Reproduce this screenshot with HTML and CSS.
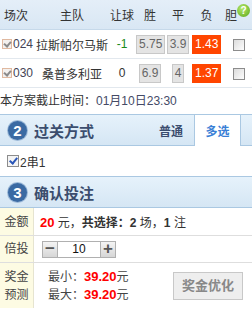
FILE: index.html
```html
<!DOCTYPE html>
<html lang="zh-CN">
<head>
    <meta charset="UTF-8">
    <meta name="viewport" content="width=device-width, initial-scale=1.0">
    <title>确认投注</title>
    <link rel="stylesheet" href="styles.css">
</head>
<body>
    <div class="panel">
        <div class="match-head">
            <span class="c-no">场次</span>
            <span class="c-team">主队</span>
            <span class="c-rq">让球</span>
            <span class="c-odd">胜</span>
            <span class="c-odd">平</span>
            <span class="c-odd">负</span>
            <span class="c-dan">胆<i class="help">?</i></span>
        </div>

        <div class="match-row">
            <span class="c-no"><i class="tick"></i>024</span>
            <span class="c-team">拉斯帕尔马斯</span>
            <span class="c-rq minus">-1</span>
            <span class="c-odd"><b class="odd">5.75</b></span>
            <span class="c-odd"><b class="odd">3.9</b></span>
            <span class="c-odd"><b class="odd on">1.43</b></span>
            <span class="c-dan"><i class="box"></i></span>
        </div>
        <div class="match-row">
            <span class="c-no"><i class="tick"></i>030</span>
            <span class="c-team">桑普多利亚</span>
            <span class="c-rq">0</span>
            <span class="c-odd"><b class="odd">6.9</b></span>
            <span class="c-odd"><b class="odd">4</b></span>
            <span class="c-odd"><b class="odd on">1.37</b></span>
            <span class="c-dan"><i class="box"></i></span>
        </div>

        <div class="deadline">本方案截止时间：<span>01月10日23:30</span></div>

        <div class="sec-head">
            <span class="num">2</span>
            <span class="sec-title">过关方式</span>
            <span class="tab">普通</span>
            <span class="tab active">多选</span>
        </div>
        <div class="pass-row">
            <i class="check"></i>2串1
        </div>

        <div class="sec-head">
            <span class="num">3</span>
            <span class="sec-title">确认投注</span>
        </div>
        <div class="form-row amount">
            <span class="label">金额</span>
            <span class="value"><span><em class="red">20</em> 元，<strong>共选择：</strong><strong>2</strong> 场，<strong>1</strong> 注</span></span>
        </div>
        <div class="form-row multiple">
            <span class="label">倍投</span>
            <span class="value">
                <span class="stepper">
                    <span class="step">&minus;</span>
                    <span class="times">10</span>
                    <span class="step">+</span>
                </span>
            </span>
        </div>
        <div class="form-row prize">
            <span class="label">奖金<br>预测</span>
            <span class="value">
                <span class="prize-list">
                    <span>最小：<em class="red">39.20</em>元</span>
                    <span>最大：<em class="red">39.20</em>元</span>
                </span>
                <span class="opt-btn">奖金优化</span>
            </span>
        </div>
    </div>
</body>
</html>
```

FILE: styles.css
```css
body {
    margin: 0;
    padding: 0;
    background-color: #fff;
    font-family: "Liberation Sans", "Noto Sans CJK SC", sans-serif;
    font-size: 12px;
    color: #333;
}
.panel {
    width: 252px;
}
.match-head,
.match-row {
    display: grid;
    grid-template-columns: 36px 72px 28px 28px 28px 29px 31px;
    align-items: center;
}
.match-head {
    height: 29px;
    background: linear-gradient(#e4eef8, #d9e7f4);
    border-bottom: 1px solid #c6d9ea;
    font-size: 12px;
}
.match-head span {
    text-align: center;
}
.match-head .c-no {
    text-align: left;
    padding-left: 4px;
}
.match-head .c-dan {
    text-align: left;
    padding-left: 4px;
    white-space: nowrap;
}
.help {
    display: inline-block;
    vertical-align: top;
    margin-top: -2px;
    width: 13px;
    height: 13px;
    border-radius: 50%;
    background: radial-gradient(circle at 40% 35%, #b5ea6a, #5aa51a);
    color: #fff;
    font-style: normal;
    font-weight: bold;
    font-size: 10px;
    line-height: 13px;
    text-align: center;
}
.match-row {
    height: 28px;
    border-bottom: 1px solid #e2e8ee;
    font-size: 12px;
}
.match-row .c-no {
    display: flex;
    align-items: center;
    padding-left: 2px;
    color: #445;
}
.match-row .c-team,
.match-row .c-rq,
.match-row .c-odd {
    text-align: center;
    color: #333;
}
.match-row .c-rq.minus {
    color: #1a8a1a;
}
.tick {
    display: inline-block;
    width: 8px;
    height: 8px;
    border: 1px solid #e0b9a0;
    background: #f3f0ee;
    position: relative;
    margin-right: 1px;
}
.tick::after {
    content: "";
    position: absolute;
    left: 2px;
    top: 0;
    width: 3px;
    height: 5px;
    border: solid #8a8a8a;
    border-width: 0 2px 2px 0;
    transform: rotate(40deg);
}
.odd {
    display: inline-block;
    padding: 0 2px;
    height: 17px;
    line-height: 17px;
    background: #e4e4e4;
    border: 1px solid #c8c8c8;
    color: #666;
    font-weight: normal;
    font-size: 12px;
}
.odd.on {
    background: #ff4500;
    border-color: #ff4500;
    color: #fff;
}
.match-row .c-dan {
    text-align: center;
    padding-left: 4px;
}
.box {
    display: inline-block;
    width: 10px;
    height: 10px;
    border: 1px solid #8c8c8c;
    background: linear-gradient(135deg, #dcdcdc, #fdfdfd);
    vertical-align: middle;
}
.deadline {
    height: 26px;
    line-height: 26px;
    font-size: 12px;
    color: #333;
}
.deadline span {
    color: #444a66;
}
.sec-head {
    display: flex;
    align-items: center;
    height: 30px;
    background: linear-gradient(#e6f2fb, #d5e6f4);
    border-top: 1px solid #aac8e2;
    border-bottom: 1px solid #aac8e2;
}
.num {
    width: 19px;
    height: 19px;
    margin-left: 8px;
    border-radius: 50%;
    background: #3a6aa3;
    box-shadow: 0 0 0 1px #9cb9d8;
    color: #fff;
    font-weight: bold;
    font-size: 15px;
    line-height: 19px;
    text-align: center;
}
.sec-title {
    margin-left: 7px;
    font-size: 15px;
    font-weight: bold;
    color: #3b4d6e;
    flex: 1;
}
.tab {
    font-size: 12px;
    font-weight: bold;
    color: #3b4d6e;
    padding-right: 11px;
}
.tab.active {
    align-self: stretch;
    display: flex;
    align-items: center;
    justify-content: center;
    width: 45px;
    padding: 0;
    margin: 0 11px -1px 0;
    background: #fff;
    border-left: 1px solid #aac8e2;
    border-right: 1px solid #aac8e2;
    color: #3a7fd6;
}
.pass-row {
    display: flex;
    align-items: center;
    height: 30px;
    padding-left: 7px;
    font-size: 12px;
    color: #333;
}
.check {
    display: inline-block;
    width: 10px;
    height: 10px;
    border: 1px solid #8c8c8c;
    background: #f4f4f4;
    position: relative;
    margin-right: 1px;
}
.check::after {
    content: "";
    position: absolute;
    left: 3px;
    top: 0;
    width: 3px;
    height: 6px;
    border: solid #2a56b8;
    border-width: 0 2px 2px 0;
    transform: rotate(40deg);
}
.form-row {
    display: grid;
    grid-template-columns: 34px 1fr;
    border-bottom: 1px solid #dedede;
}
.form-row.amount {
    height: 27px;
}
.form-row.multiple {
    height: 26px;
}
.form-row.prize {
    height: 45px;
    border-bottom: none;
}
.label {
    display: flex;
    align-items: center;
    justify-content: center;
    background: #fdfbe3;
    border-right: 1px solid #e6e4d0;
    color: #444;
    font-size: 12px;
    line-height: 18px;
    text-align: center;
}
.value {
    display: flex;
    align-items: center;
    padding-left: 6px;
    color: #333;
    font-size: 12px;
    min-width: 0;
}
.red {
    color: #f00;
    font-style: normal;
    font-weight: bold;
    font-size: 13px;
}
.stepper {
    display: flex;
    align-items: center;
    margin-left: 2px;
}
.step {
    width: 14px;
    height: 15px;
    line-height: 14px;
    border: 1px solid #b0b0b0;
    background: linear-gradient(#f4f4f4, #d6d6d6);
    color: #555;
    font-size: 17px;
    font-weight: bold;
    text-align: center;
}
.times {
    width: 42px;
    height: 15px;
    line-height: 15px;
    border-top: 1px solid #b0b0b0;
    border-bottom: 1px solid #b0b0b0;
    text-align: center;
    color: #111;
    font-size: 12px;
}
.prize-list {
    display: flex;
    flex-direction: column;
    gap: 2px;
    padding-left: 8px;
    flex: 1;
    color: #444;
    line-height: 16px;
}
.opt-btn {
    margin-right: 9px;
    padding: 0 8px;
    height: 26px;
    line-height: 26px;
    border: 1px solid #c8c8c8;
    background: #eee;
    color: #888;
    font-weight: bold;
    font-size: 13px;
}
```
